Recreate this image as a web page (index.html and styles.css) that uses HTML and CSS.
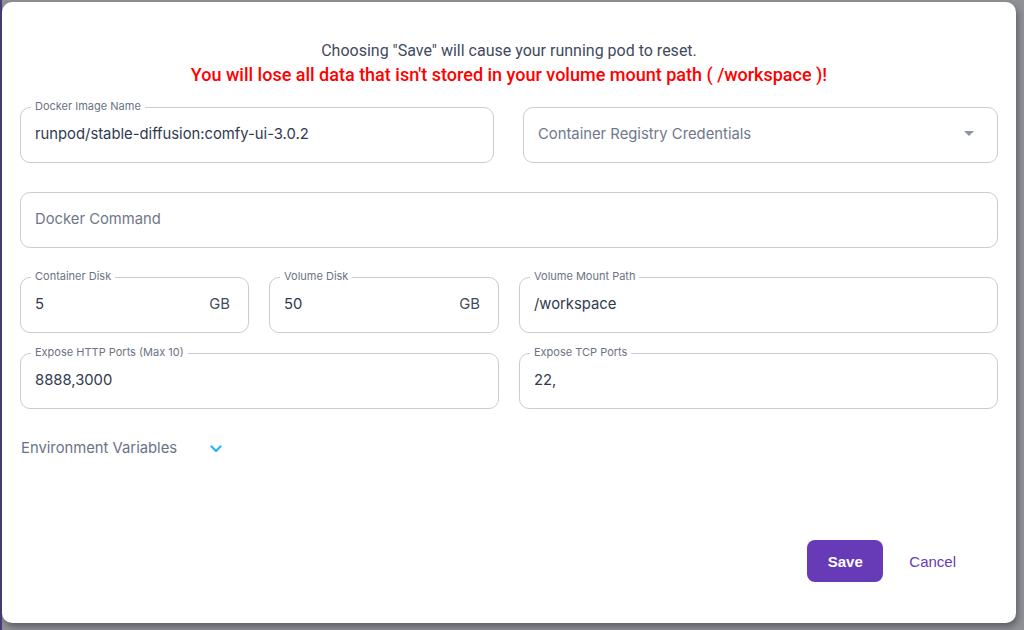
FILE: index.html
```html
<!DOCTYPE html>
<html>
<head>
<meta charset="utf-8">
<link rel="stylesheet" href="styles.css">
</head>
<body>
<div class="backdrop">
  <div class="modal">
    <div class="notice">
      <p class="notice-line">Choosing "Save" will cause your running pod to reset.</p>
      <p class="notice-warn">You will lose all data that isn't stored in your volume mount path ( /workspace )!</p>
    </div>
    <div class="row row-top">
      <div class="field">
        <span class="label">Docker Image Name</span>
        <span class="value">runpod/stable-diffusion:comfy-ui-3.0.2</span>
      </div>
      <div class="field">
        <span class="placeholder">Container Registry Credentials</span>
        <svg class="caret" width="10" height="5" viewBox="0 0 10 5"><path d="M0 0h10L5 5z" fill="#8a94a6"/></svg>
      </div>
    </div>
    <div class="row row-single">
      <div class="field">
        <span class="placeholder">Docker Command</span>
      </div>
    </div>
    <div class="row row-three">
      <div class="field">
        <span class="label">Container Disk</span>
        <span class="value">5</span>
        <span class="unit">GB</span>
      </div>
      <div class="field">
        <span class="label">Volume Disk</span>
        <span class="value">50</span>
        <span class="unit">GB</span>
      </div>
      <div class="field">
        <span class="label">Volume Mount Path</span>
        <span class="value">/workspace</span>
      </div>
    </div>
    <div class="row row-two">
      <div class="field">
        <span class="label">Expose HTTP Ports (Max 10)</span>
        <span class="value">8888,3000</span>
      </div>
      <div class="field">
        <span class="label">Expose TCP Ports</span>
        <span class="value">22,</span>
      </div>
    </div>
    <div class="env">
      <span class="env-text">Environment Variables</span>
      <svg class="chevron" width="12" height="8" viewBox="0 0 12 8"><path d="M1.5 1.5L6 6l4.5-4.5" fill="none" stroke="#29b6f6" stroke-width="2.2" stroke-linecap="round" stroke-linejoin="round"/></svg>
    </div>
    <div class="actions">
      <button class="btn-save">Save</button>
      <button class="btn-cancel">Cancel</button>
    </div>
  </div>
</div>
</body>
</html>
```
FILE: styles.css
```css
* { box-sizing: border-box; }
html, body { margin: 0; padding: 0; }
body {
  width: 1024px;
  height: 630px;
  overflow: hidden;
  font-family: Inter, "Noto Sans", sans-serif;
  background: #8f8f96;
}
.backdrop {
  width: 1024px;
  height: 630px;
  padding: 2px 8px 7px 2px;
  background: linear-gradient(to right, #4a3a78 0, #4a3a78 2px, #909097 2px);
}
.modal {
  height: 621px;
  background: #ffffff;
  border-radius: 10px;
  box-shadow: 2px 4px 6px rgba(40, 40, 50, 0.45);
  padding: 39px 18px 0 18px;
  display: flex;
  flex-direction: column;
}
.notice { text-align: center; }
.notice-line {
  margin: 0;
  font-family: Roboto, "Noto Sans", sans-serif;
  font-size: 16px;
  line-height: 20px;
  color: #3f4a5e;
}
.notice-warn {
  margin: 3px 0 0 0;
  font-family: Roboto, "Noto Sans", sans-serif;
  font-size: 18px;
  line-height: 22px;
  font-weight: 500;
  color: #ff0000;
}
.row { display: grid; }
.row-top { grid-template-columns: 474px 475px; column-gap: 29px; margin-top: 21px; }
.row-single { grid-template-columns: 1fr; margin-top: 29px; }
.row-three { grid-template-columns: 229px 230px 479px; column-gap: 20px; margin-top: 29px; }
.row-two { grid-template-columns: 479px 479px; column-gap: 20px; margin-top: 20px; }
.field {
  position: relative;
  height: 56px;
  border: 1px solid #c9ccd1;
  border-radius: 10px;
  display: flex;
  align-items: center;
  padding: 0 14px 3px 14px;
}
.label {
  position: absolute;
  top: -8px;
  left: 10px;
  padding: 0 4px;
  background: #ffffff;
  font-size: 11px;
  line-height: 13px;
  color: #6b7384;
}
.value {
  font-size: 14.8px;
  color: #2f3a4f;
  flex: 1;
}
.placeholder {
  font-size: 14.8px;
  color: #6f788a;
  flex: 1;
}
.unit {
  font-size: 14.8px;
  color: #3f4a5e;
  margin-right: 4px;
}
.caret { margin-right: 9px; }
.env {
  display: flex;
  align-items: center;
  margin-top: 29px;
  padding-left: 1px;
  height: 20px;
}
.env-text {
  font-size: 14.8px;
  color: #6a7386;
  width: 189px;
}
.chevron { margin-top: 1px; }
.actions {
  display: flex;
  justify-content: flex-end;
  align-items: center;
  margin-top: 82px;
  padding-right: 42px;
}
.btn-save {
  width: 76px;
  height: 42px;
  border: 0;
  border-radius: 8px;
  background: #673ab7;
  color: #ffffff;
  font-family: "Liberation Sans", Arial, sans-serif;
  font-weight: 700;
  font-size: 15px;
}
.btn-cancel {
  border: 0;
  background: transparent;
  color: #673ab7;
  font-family: "Liberation Sans", Arial, sans-serif;
  font-size: 15px;
  margin-left: 26px;
  padding: 0;
}
```
